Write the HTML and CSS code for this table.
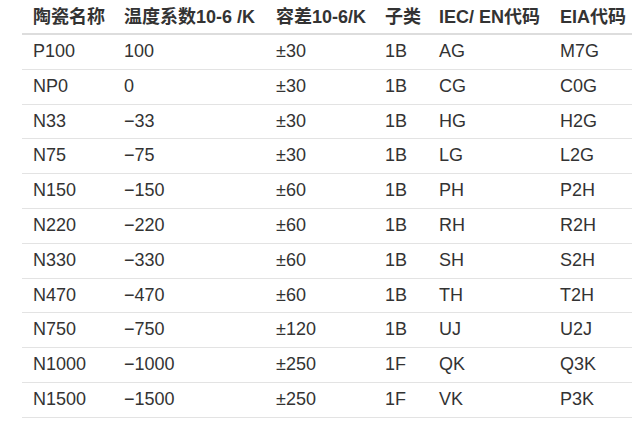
FILE: index.html
```html
<!DOCTYPE html>
<html>
<head>
<meta charset="utf-8">
<link rel="stylesheet" href="styles.css">
</head>
<body>
<table class="spec">
<colgroup>
<col class="c1"><col class="c2"><col class="c3"><col class="c4"><col class="c5"><col class="c6">
</colgroup>
<thead>
<tr><th>陶瓷名称</th><th>温度系数10-6 /K</th><th>容差10-6/K</th><th>子类</th><th>IEC/ EN代码</th><th>EIA代码</th></tr>
</thead>
<tbody>
<tr><td>P100</td><td>100</td><td>±30</td><td>1B</td><td>AG</td><td>M7G</td></tr>
<tr><td>NP0</td><td>0</td><td>±30</td><td>1B</td><td>CG</td><td>C0G</td></tr>
<tr><td>N33</td><td>−33</td><td>±30</td><td>1B</td><td>HG</td><td>H2G</td></tr>
<tr><td>N75</td><td>−75</td><td>±30</td><td>1B</td><td>LG</td><td>L2G</td></tr>
<tr><td>N150</td><td>−150</td><td>±60</td><td>1B</td><td>PH</td><td>P2H</td></tr>
<tr><td>N220</td><td>−220</td><td>±60</td><td>1B</td><td>RH</td><td>R2H</td></tr>
<tr><td>N330</td><td>−330</td><td>±60</td><td>1B</td><td>SH</td><td>S2H</td></tr>
<tr><td>N470</td><td>−470</td><td>±60</td><td>1B</td><td>TH</td><td>T2H</td></tr>
<tr><td>N750</td><td>−750</td><td>±120</td><td>1B</td><td>UJ</td><td>U2J</td></tr>
<tr><td>N1000</td><td>−1000</td><td>±250</td><td>1F</td><td>QK</td><td>Q3K</td></tr>
<tr><td>N1500</td><td>−1500</td><td>±250</td><td>1F</td><td>VK</td><td>P3K</td></tr>
</tbody>
</table>
</body>
</html>
```
FILE: styles.css
```css
html, body {
  margin: 0;
  padding: 0;
  background: #fff;
}
body {
  font-family: "Liberation Sans", Arial, "Noto Sans CJK SC", sans-serif;
  font-size: 18px;
  color: #333;
}
.spec {
  margin-left: 22px;
  width: 610px;
  border-collapse: collapse;
  table-layout: fixed;
}
.c1 { width: 91px; }
.c2 { width: 152px; }
.c3 { width: 109px; }
.c4 { width: 54px; }
.c5 { width: 121px; }
.c6 { width: 83px; }
.spec th {
  text-align: left;
  font-weight: bold;
  white-space: nowrap;
  padding: 7px 11px 6px 11px;
  line-height: 20px;
  height: 20px;
  border-bottom: 2px solid #ddd;
  color: #333;
}
.spec td {
  padding: 7px 11px 7px 11px;
  line-height: 19.8px;
  height: 19.8px;
  border-bottom: 1px solid #e3e3e3;
  white-space: nowrap;
}
```
